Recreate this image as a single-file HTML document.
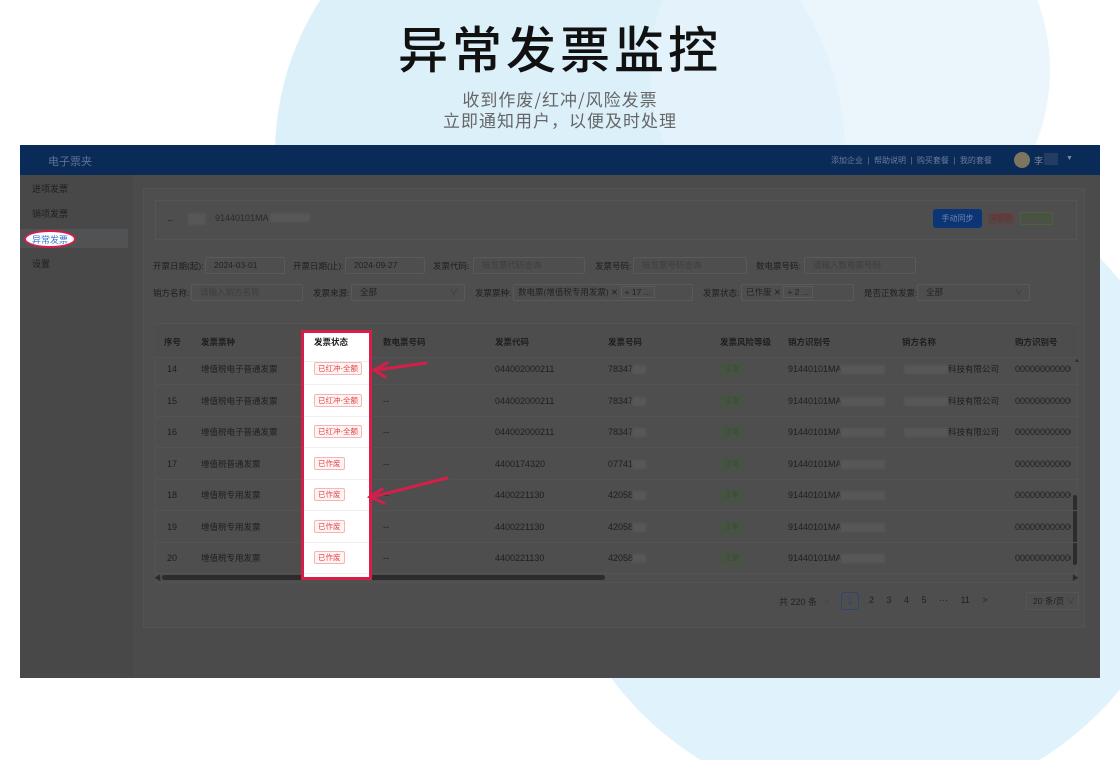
<!DOCTYPE html>
<html><head><meta charset="utf-8"><style>
*{margin:0;padding:0;box-sizing:border-box}
html,body{width:1120px;height:760px;overflow:hidden}
body{background:#fff;position:relative;font-family:"Liberation Sans","Noto Sans CJK SC",sans-serif}
.a{position:absolute;white-space:nowrap}
.t{font-size:9px;color:#1e1e1e;line-height:12px}
.in{position:absolute;border:1px solid #5a5a5a;border-radius:2px;height:17px;font-size:8.5px;line-height:15px;padding-left:8px;color:#222}
.ph{color:#3e3e3e}
.tag{position:absolute;font-size:7.5px;line-height:11px;padding:0 3px;border:1px solid #f3b6b6;background:#fff3f3;color:#e04848;border-radius:2px}
.ok{position:absolute;font-size:7px;line-height:10px;padding:0 3px;border:1px solid #3d5a34;color:#2d5322;border-radius:2px;background:#4b5049}
.blur{position:absolute;height:9px;background:#575757;filter:blur(1px)}
</style></head><body>
<div class="a" style="left:0;top:0;width:1120px;height:760px;overflow:hidden">
<div class="a" style="left:275px;top:-131px;width:570px;height:570px;border-radius:50%;background:#dcf0fa"></div>
<div class="a" style="left:650px;top:-130px;width:400px;height:400px;border-radius:50%;background:#e6f4fb;opacity:.8"></div>
<div class="a" style="left:547px;top:162px;width:646px;height:646px;border-radius:50%;background:#e0f2fb"></div>
</div>

<div class="a" style="left:0;top:17px;width:1120px;text-align:center;font-size:50px;line-height:60px;color:#111;font-family:'Noto Sans CJK SC',sans-serif;font-weight:500;letter-spacing:4px">异常发票监控</div>
<div class="a" style="left:0;top:88px;width:1120px;text-align:center;font-size:17px;line-height:21px;color:#666;font-family:'Noto Sans CJK SC',sans-serif;letter-spacing:1px">收到作废/红冲/风险发票<br>立即通知用户，以便及时处理</div>

<div class="a" style="left:20px;top:145px;width:1080px;height:533px;background:#4b4b4b;overflow:hidden">
 <div class="a" style="left:0;top:0;width:1080px;height:30px;background:#0a2a58"></div>
 <div class="a" style="left:28px;top:8px;font-size:11px;color:#5f7290">电子票夹</div>
 <div class="a" style="left:811px;top:10px;font-size:8px;color:#6c7c96">添加企业 &nbsp;|&nbsp; 帮助说明 &nbsp;|&nbsp; 购买套餐 &nbsp;|&nbsp; 我的套餐</div>
 <div class="a" style="left:994px;top:7px;width:16px;height:16px;border-radius:50%;background:#7c7660"></div>
 <div class="a" style="left:1014px;top:9px;font-size:9px;color:#7c869a">李</div>
 <div class="a" style="left:1024px;top:8px;width:14px;height:12px;background:#243c62"></div>
 <div class="a" style="left:1046px;top:10px;font-size:7px;color:#7c869a">▼</div>
 <div class="a" style="left:0;top:30px;width:113px;height:503px;background:#484848"></div>
 <div class="a" style="left:0;top:84px;width:108px;height:19px;background:#505254"></div>
 <div class="a t" style="left:12px;top:38px">进项发票</div>
 <div class="a t" style="left:12px;top:63px">销项发票</div>
 <div class="a" style="left:4px;top:85px;width:52px;height:18px;border-radius:50%;background:#fff;border:2px solid #d51e4a"></div>
 <div class="a" style="left:12px;top:88px;font-size:9px;color:#3a78d0">异常发票</div>
 <div class="a t" style="left:12px;top:113px">设置</div>
 <div class="a" style="left:123px;top:43px;width:942px;height:440px;background:#4e4e4e;border:1px solid #535353"></div>
 <div class="a" style="left:135px;top:55px;width:922px;height:40px;border:1px solid #555"></div>
 <div class="a t" style="left:146px;top:68px">←</div>
 <div class="blur" style="left:168px;top:68px;width:18px;height:12px"></div>
 <div class="a" style="left:195px;top:68px;font-size:9px;color:#2a2a2a">91440101MA</div>
 <div class="blur" style="left:250px;top:68px;width:40px"></div>
 <div class="a" style="left:913px;top:64px;width:49px;height:19px;background:#0b3574;border-radius:3px;color:#6f86ad;font-size:8px;line-height:19px;text-align:center">手动同步</div>
 <div class="a" style="left:967px;top:67px;width:28px;height:13px;border:1px solid #6a4444;background:#524646;color:#7a2828;font-size:7px;line-height:11px;text-align:center">未登录</div>
 <div class="a" style="left:1000px;top:67px;width:33px;height:13px;border:1px solid #4b6040;background:#4c5049;color:#3c5e2c;font-size:7px;line-height:11px;text-align:center">同步完成</div>
 <div class="a t" style="left:133px;top:115px;font-size:8.5px">开票日期(起):</div>
 <div class="in" style="left:185px;top:112px;width:80px">2024-03-01</div>
 <div class="a t" style="left:273px;top:115px;font-size:8.5px">开票日期(止):</div>
 <div class="in" style="left:325px;top:112px;width:80px">2024-09-27</div>
 <div class="a t" style="left:413px;top:115px;font-size:8.5px">发票代码:</div>
 <div class="in ph" style="left:453px;top:112px;width:112px">按发票代码查询</div>
 <div class="a t" style="left:575px;top:115px;font-size:8.5px">发票号码:</div>
 <div class="in ph" style="left:613px;top:112px;width:114px">按发票号码查询</div>
 <div class="a t" style="left:736px;top:115px;font-size:8.5px">数电票号码:</div>
 <div class="in ph" style="left:784px;top:112px;width:112px">请输入数电票号码</div>
 <div class="a t" style="left:133px;top:142px;font-size:8.5px">销方名称:</div>
 <div class="in ph" style="left:171px;top:139px;width:112px">请输入销方名称</div>
 <div class="a t" style="left:293px;top:142px;font-size:8.5px">发票来源:</div>
 <div class="in" style="left:331px;top:139px;width:114px">全部<span style="position:absolute;right:6px;color:#3a3a3a">∨</span></div>
 <div class="a t" style="left:455px;top:142px;font-size:8.5px">发票票种:</div>
 <div class="in" style="left:493px;top:139px;width:180px;padding-left:4px">数电票(增值税专用发票) ✕ <span style="border:1px solid #5a5a5a;padding:0 3px">+ 17 ...</span></div>
 <div class="a t" style="left:683px;top:142px;font-size:8.5px">发票状态:</div>
 <div class="in" style="left:721px;top:139px;width:113px;padding-left:4px">已作废 ✕ <span style="border:1px solid #5a5a5a;padding:0 3px">+ 2 ...</span></div>
 <div class="a t" style="left:844px;top:142px;font-size:8.5px">是否正数发票:</div>
 <div class="in" style="left:897px;top:139px;width:113px">全部<span style="position:absolute;right:6px;color:#3a3a3a">∨</span></div>
 <div class="a" style="left:135px;top:178px;width:922px;height:260px;border:1px solid #535353"></div>
 <div class="a" style="left:135px;top:179px;width:922px;height:34px;background:#4d4d4d;border-bottom:1px solid #535353"></div>
 <div class="a" style="left:142px;top:430px;width:443px;height:5px;border-radius:3px;background:#2c2c2c"></div>
 <div class="a" style="left:134px;top:428px;font-size:7px;color:#2c2c2c">◀</div>
 <div class="a" style="left:1052px;top:428px;font-size:7px;color:#2c2c2c">▶</div>
 <div class="a" style="left:1054px;top:213px;font-size:6px;color:#2c2c2c">▲</div>
 <div class="a" style="left:1053px;top:350px;width:4px;height:70px;border-radius:2px;background:#2c2c2c"></div>
 <div class="a" style="z-index:2;left:281px;top:185px;width:71px;height:250px;background:#fff;border:3px solid #d51e4a"></div>
 <div class="a" style="z-index:2;left:284px;top:216px;width:65px;height:1px;background:#f0f0f0"></div>
 <div class="a" style="left:759px;top:450px;font-size:9px;color:#222">共 220 条 &nbsp;&nbsp;<span style="color:#444">&lt;</span></div>
 <div class="a" style="left:821px;top:447px;width:18px;height:18px;border:1px solid #30456a;border-radius:3px;font-size:9px;line-height:16px;text-align:center;color:#30456a">1</div>
 <div class="a" style="left:849px;top:450px;font-size:9px;color:#222;word-spacing:10px">2 3 4 5 ··· 11 &gt;</div>
 <div class="a" style="left:1006px;top:447px;width:53px;height:18px;border:1px solid #555;font-size:8.5px;line-height:16px;padding-left:6px;color:#222">20 条/页 <span style="color:#3a3a3a">∨</span></div>
</div>

<script>
var rows=[["14","增值税电子普通发票","已红冲-全额","","044002000211","78347",1],["15","增值税电子普通发票","已红冲-全额","--","044002000211","78347",1],["16","增值税电子普通发票","已红冲-全额","--","044002000211","78347",1],["17","增值税普通发票","已作废","--","4400174320","07741",0],["18","增值税专用发票","已作废","--","4400221130","42058",0],["19","增值税专用发票","已作废","--","4400221130","42058",0],["20","增值税专用发票","已作废","--","4400221130","42058",0]];
var h='';
var hd=[["序号",164],["发票票种",201],["发票状态",314],["数电票号码",383],["发票代码",495],["发票号码",608],["发票风险等级",720],["销方识别号",788],["销方名称",902],["购方识别号",1015]];
hd.forEach(function(c){h+='<div class="a t" style="z-index:3;font-weight:bold;font-size:8.5px;left:'+c[1]+'px;top:336px">'+c[0]+'</div>';});
rows.forEach(function(r,i){var y=363+i*31.5;
 h+='<div class="a" style="left:156px;top:'+(y+21)+'px;width:922px;height:1px;background:#535353"></div>';
 h+='<div class="a" style="z-index:3;left:304px;top:'+(y+21)+'px;width:65px;height:1px;background:#f0f0f0"></div>';
 h+='<div class="a t" style="left:167px;top:'+y+'px">'+r[0]+'</div>';
 h+='<div class="a t" style="left:201px;top:'+y+'px;font-size:8.5px">'+r[1]+'</div>';
 h+='<div class="tag" style="z-index:3;left:314px;top:'+(y-1)+'px">'+r[2]+'</div>';
 h+='<div class="a t" style="left:383px;top:'+y+'px">'+r[3]+'</div>';
 h+='<div class="a t" style="left:495px;top:'+y+'px">'+r[4]+'</div>';
 h+='<div class="a t" style="left:608px;top:'+y+'px">'+r[5]+'</div>';
 h+='<div class="blur" style="left:632px;top:'+(y+2)+'px;width:14px"></div>';
 h+='<div class="ok" style="left:721px;top:'+(y+1)+'px">正常</div>';
 h+='<div class="a t" style="left:788px;top:'+y+'px">91440101MA</div>';
 h+='<div class="blur" style="left:840px;top:'+(y+2)+'px;width:45px"></div>';
 if(r[6]){h+='<div class="blur" style="left:904px;top:'+(y+2)+'px;width:44px"></div><div class="a t" style="left:948px;top:'+y+'px;font-size:8.5px">科技有限公司</div>';}
 h+='<div class="a t" style="left:1015px;top:'+y+'px;width:56px;overflow:hidden">00000000000000</div>';
});
document.write(h);
</script>
<svg class="a" style="left:0;top:0;z-index:5" width="1120" height="760">
 <g stroke="#d51e4a" stroke-width="3" fill="none" stroke-linecap="round">
  <line x1="426" y1="363" x2="376" y2="370"/>
  <path d="M387 363 L374 370 L385 377"/>
  <line x1="447" y1="478" x2="372" y2="497"/>
  <path d="M382 489 L370 497 L384 503"/>
 </g>
</svg>
</body></html>
